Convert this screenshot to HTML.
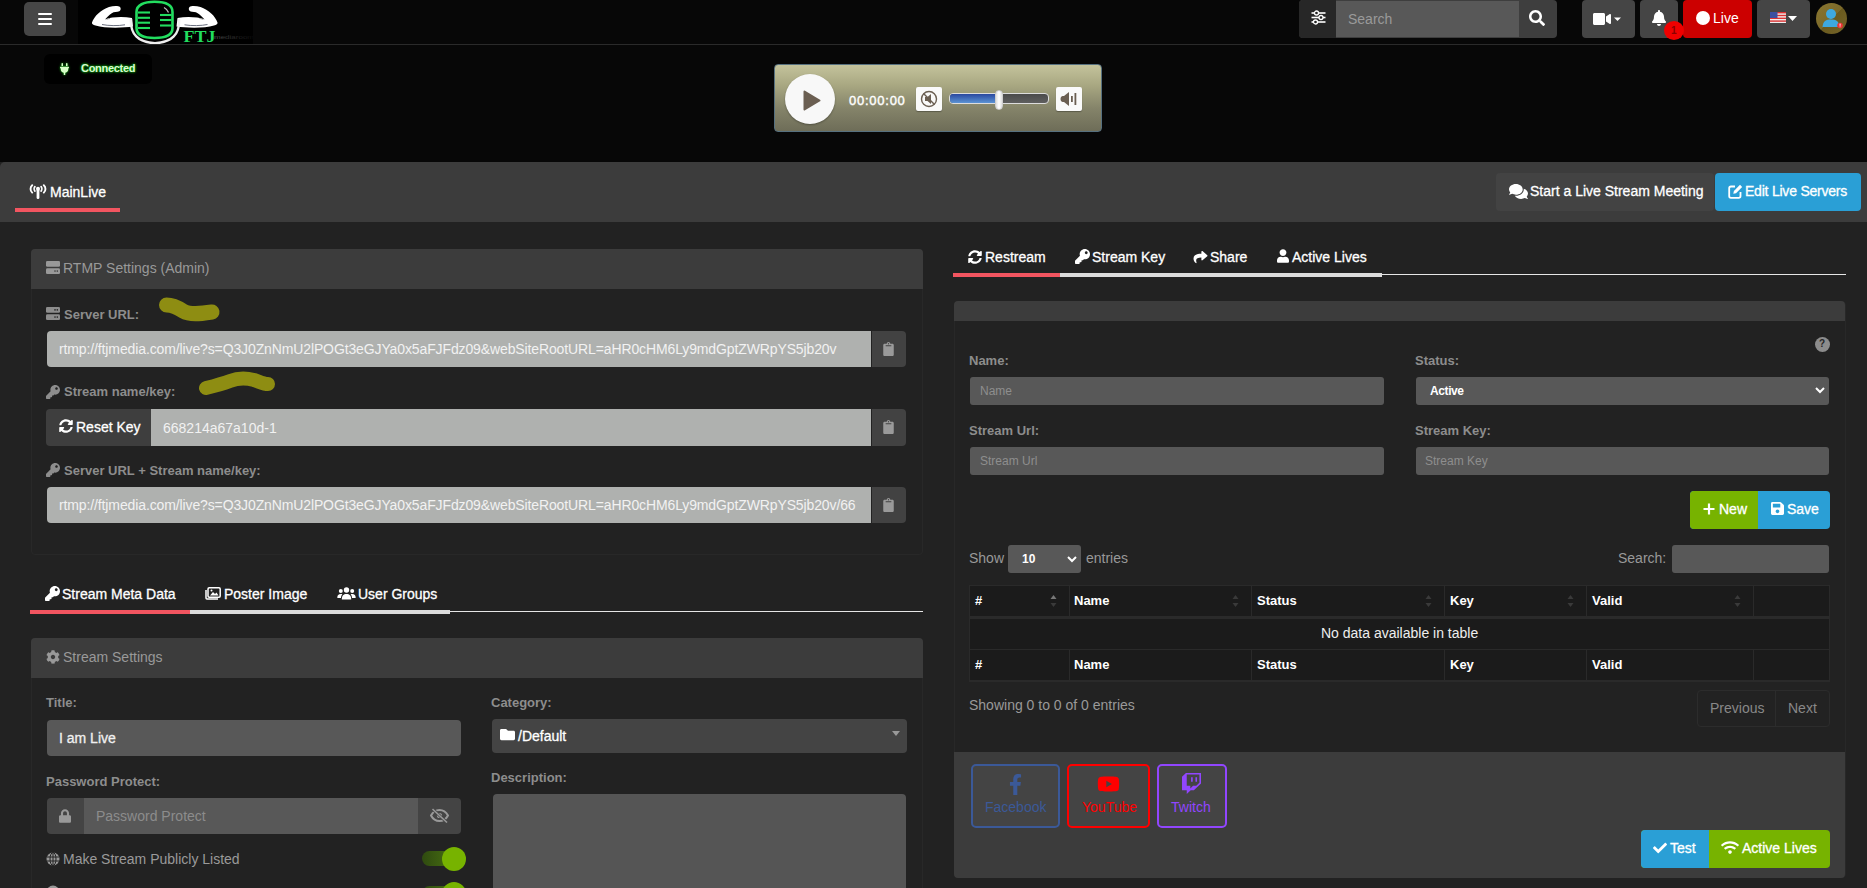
<!DOCTYPE html>
<html><head><meta charset="utf-8">
<style>
*{box-sizing:border-box;margin:0;padding:0}
html,body{width:1867px;height:888px;overflow:hidden;background:#222;font-family:"Liberation Sans",sans-serif;color:#fff}
.a{position:absolute}
.t{position:absolute;line-height:1;white-space:nowrap}
svg{position:absolute;display:block}
#top{left:0;top:0;width:1867px;height:162px;background:#070707}
.navline{left:0;top:44px;width:1867px;height:1px;background:#2a2a2a}
.btn{position:absolute;border-radius:4px}
.lbl{position:absolute;line-height:1;white-space:nowrap;font-weight:bold;font-size:13px;color:#8d8d8d}
</style></head><body>
<!-- TOP AREA -->
<div class="a" id="top"></div>
<div class="a navline"></div>
<!-- hamburger -->
<div class="btn" style="left:24px;top:2px;width:42px;height:34px;background:#464646;border-radius:5px"></div>
<div class="a" style="left:38px;top:13px;width:14px;height:2px;background:#fff;border-radius:1px"></div>
<div class="a" style="left:38px;top:18px;width:14px;height:2px;background:#fff;border-radius:1px"></div>
<div class="a" style="left:38px;top:23px;width:14px;height:2px;background:#fff;border-radius:1px"></div>
<!-- logo -->
<div class="a" style="left:78px;top:0;width:175px;height:44px;background:#000"></div>
<svg style="left:78px;top:0px" width="175" height="44" viewBox="0 0 175 44">
  <defs><linearGradient id="mg" x1="0" x2="1"><stop offset="0" stop-color="#5a5a5a"/><stop offset="0.3" stop-color="#333"/><stop offset="1" stop-color="#0a0a0a"/></linearGradient></defs>
  <g>
  <path d="M14 22.5 C16 16.5 23 9.5 31 7 C35 6 40 5.5 42 7 C43.5 9 42.5 11.5 39.5 11.8 C36.5 12 34.5 12.3 32 14.5 C30 16.3 28.5 18 27 19.5 C34 16.8 45 16.5 54 18 L55 26.5 C45 28 27 28.5 17.5 25.5 C15 24.8 13.6 23.8 14 22.5 Z" fill="#fff"/>
  <path d="M24 24.5 C30 25.8 40 26 47 24.8" fill="none" stroke="#5a6070" stroke-width="0.9"/>
  <path d="M28.5 19.3 C30 18.8 31 18.6 32 18.5" fill="none" stroke="#777" stroke-width="0.7"/>
  </g>
  <g transform="translate(153.5,0) scale(-1,1)">
  <path d="M14 22.5 C16 16.5 23 9.5 31 7 C35 6 40 5.5 42 7 C43.5 9 42.5 11.5 39.5 11.8 C36.5 12 34.5 12.3 32 14.5 C30 16.3 28.5 18 27 19.5 C34 16.8 45 16.5 54 18 L55 26.5 C45 28 27 28.5 17.5 25.5 C15 24.8 13.6 23.8 14 22.5 Z" fill="#fff"/>
  <path d="M24 24.5 C30 25.8 40 26 47 24.8" fill="none" stroke="#5a6070" stroke-width="0.9"/>
  <path d="M28.5 19.3 C30 18.8 31 18.6 32 18.5" fill="none" stroke="#777" stroke-width="0.7"/>
  </g>
  <path d="M53 19 C52 34 60 42.5 77 43.2 C94 42.5 102 34 101 19" fill="none" stroke="#eee" stroke-width="2.4"/>
  <path d="M58.5 12 C58.5 5 66 1.8 76.5 1.8 C87 1.8 94.5 5 94.5 12 V28 C94.5 35 87 38 76.5 38 C66 38 58.5 35 58.5 28 Z" fill="#000" stroke="#22dd5f" stroke-width="2.6"/>
  <g stroke="#22dd5f" stroke-width="2.1">
   <line x1="60" y1="12.5" x2="72" y2="12.5"/><line x1="60" y1="17.8" x2="72" y2="17.8"/><line x1="60" y1="22.7" x2="72" y2="22.7"/><line x1="60" y1="28" x2="72" y2="28"/>
   <line x1="82" y1="15" x2="93.5" y2="15"/><line x1="82" y1="20" x2="93.5" y2="20"/><line x1="82" y1="25.5" x2="93.5" y2="25.5"/>
  </g>
  <path d="M86 7.5 C88 8.5 89.5 10 90.5 12.5" stroke="#bbb" stroke-width="1.3" fill="none"/>
  <text x="105.5" y="41.5" font-family="Liberation Serif" font-weight="bold" font-size="16.5" fill="#22dd5f" textLength="32" lengthAdjust="spacingAndGlyphs">FTJ</text>
  <text x="136" y="38.5" font-family="Liberation Sans" font-size="6" fill="url(#mg)" textLength="40" lengthAdjust="spacingAndGlyphs">mediaroom</text>
</svg>

<!-- right nav -->
<div class="btn" style="left:1299px;top:0;width:258px;height:38px;background:#3e3e3e;border-radius:4px"></div>
<div class="a" style="left:1299px;top:0;width:37px;height:38px;background:#272727;border-radius:4px 0 0 4px"></div>
<div class="a" style="left:1336px;top:1px;width:183px;height:36px;background:#585858"></div>
<svg style="left:1311px;top:10px" width="15" height="16" viewBox="0 0 15 16">
 <g stroke="#fff" stroke-width="1.6"><line x1="0.5" y1="3" x2="14.5" y2="3"/><line x1="0.5" y1="7.5" x2="14.5" y2="7.5"/><line x1="0.5" y1="12" x2="14.5" y2="12"/></g>
 <g fill="#222" stroke="#fff" stroke-width="1.3"><circle cx="5.5" cy="3" r="2"/><circle cx="10" cy="7.5" r="2"/><circle cx="4.5" cy="12" r="2"/></g>
</svg>
<div class="t" style="left:1348px;top:12px;font-size:14px;color:#9a9a9a">Search</div>
<svg style="left:1529px;top:10px" width="16" height="16" viewBox="0 0 512 512"><path d="M505 442.700L405.300 343c-4.500-4.500-10.600-7-17-7H372c27.600-35.300 44-79.700 44-128C416 93.100 322.900 0 208 0S0 93.100 0 208s93.100 208 208 208c48.300 0 92.700-16.400 128-44v16.300c0 6.400 2.500 12.500 7 17l99.700 99.700c9.400 9.400 24.600 9.400 33.900 0l28.300-28.300c9.400-9.400 9.400-24.600.1-34zM208 336c-70.700 0-128-57.200-128-128 0-70.700 57.200-128 128-128 70.700 0 128 57.200 128 128 0 70.700-57.200 128-128 128z" fill="#fff"/></svg>
<!-- video -->
<div class="btn" style="left:1582px;top:0;width:53px;height:38px;background:#454545"></div>
<svg style="left:1593px;top:11px" width="32" height="16" viewBox="0 0 32 16"><svg x="0" y="0" width="18" height="16" viewBox="0 0 576 512"><path d="M336.200 64H47.800C21.400 64 0 85.400 0 111.800v288.400C0 426.600 21.400 448 47.800 448h288.400c26.400 0 47.800-21.400 47.800-47.800V111.800c0-26.400-21.400-47.800-47.800-47.800zm189.400 37.700L416 177.300v157.400l109.600 75.500c21.200 14.600 50.400-.300 50.400-25.800V127.500c0-25.400-29.100-40.400-50.400-25.800z" fill="#fff"/></svg><path d="M21 6.5 L28 6.5 L24.5 10 Z" fill="#fff"/></svg>
<!-- bell -->
<div class="btn" style="left:1640px;top:0;width:38px;height:38px;background:#454545"></div>
<svg style="left:1652px;top:10px" width="14" height="16" viewBox="0 0 448 512"><path d="M224 512c35.320 0 63.970-28.650 63.970-64H160.030c0 35.350 28.650 64 63.970 64zm215.390-149.710c-19.320-20.760-55.470-51.990-55.470-154.290 0-77.700-54.480-139.900-127.940-155.160V32c0-17.670-14.320-32-32-32s-32 14.330-32 32v20.840C118.560 68.100 64.080 130.300 64.080 208c0 102.300-36.150 133.530-55.470 154.290-6 6.450-8.660 14.160-8.610 21.710.110 16.400 12.980 32 32.100 32h383.800c19.120 0 32-15.600 32.100-32 .050-7.550-2.610-15.270-8.610-21.710z" fill="#fff"/></svg>
<!-- live -->
<div class="btn" style="left:1683px;top:0;width:69px;height:38px;background:#cc0000"></div>
<div class="a" style="left:1696px;top:11px;width:14px;height:14px;border-radius:50%;background:#fff"></div>
<div class="t" style="left:1713px;top:11px;font-size:14px;color:#fff">Live</div>
<!-- badge -->
<div class="a" style="left:1664px;top:21px;width:20px;height:19px;border-radius:50%;background:#f00000"></div>
<div class="t" style="left:1671px;top:26px;font-size:10px;color:#8a0000;font-weight:bold">1</div>
<!-- flag -->
<div class="btn" style="left:1757px;top:0;width:53px;height:38px;background:#454545"></div>
<svg style="left:1770px;top:12px" width="16" height="11" viewBox="0 0 16 11">
 <rect width="16" height="11" fill="#eee"/>
 <g fill="#d33"><rect y="0" width="16" height="1.4"/><rect y="2.8" width="16" height="1.4"/><rect y="5.6" width="16" height="1.4"/><rect y="8.4" width="16" height="1.4"/></g>
 <rect width="7.5" height="6" fill="#3a4fa0"/>
</svg>
<svg style="left:1788px;top:16px" width="9" height="5" viewBox="0 0 9 5"><path d="M0 0 H9 L4.5 5 Z" fill="#fff"/></svg>
<!-- avatar -->
<div class="a" style="left:1816px;top:3px;width:31px;height:31px;border-radius:50%;background:linear-gradient(135deg,#8a7630 0%,#7c6a2a 50%,#6a5a1e 51%,#75642a 100%)"></div>
<svg style="left:1816px;top:3px" width="31" height="31" viewBox="0 0 31 31">
 <circle cx="15" cy="11" r="5" fill="#3ea9e0"/><path d="M6.5 24 C7 18 10 16.5 15 16.5 C20 16.5 23 18 23.5 24 Z" fill="#3ea9e0"/>
 <circle cx="24" cy="22.5" r="2.8" fill="#e33"/><rect x="23.6" y="20.6" width="0.9" height="2.2" fill="#fff"/><rect x="23.6" y="23.4" width="0.9" height="0.8" fill="#fff"/>
</svg>
<!-- connected -->
<div class="a" style="left:44px;top:54px;width:108px;height:30px;background:#000;border-radius:6px"></div>
<svg style="left:60px;top:63px;filter:drop-shadow(0 0 1px #1c1)" width="9" height="12" viewBox="0 0 384 512"><path d="M320,32a32,32,0,0,0-64,0v96h64Zm48,128H16A16,16,0,0,0,0,176v32a16,16,0,0,0,16,16H32v32A160.070,160.070,0,0,0,160,412.800V512h64V412.800A160.070,160.070,0,0,0,352,256V224h16a16,16,0,0,0,16-16V176A16,16,0,0,0,368,160ZM128,32a32,32,0,0,0-64,0v96h64Z" fill="#d8ffc8"/></svg>
<div class="t" style="left:81px;top:63px;font-size:11px;font-weight:bold;letter-spacing:-0.3px;color:#dcf5d4;text-shadow:0 0 2px #1c1,0 0 3px #0a0">Connected</div>
<!-- player -->
<div class="a" style="left:774px;top:64px;width:328px;height:68px;border-radius:4px;border:1px solid #56707f;background:linear-gradient(#c4c39c,#a9a882 30%,#85846a 65%,#6e6d58)"></div>
<div class="a" style="left:785px;top:74px;width:50px;height:50px;border-radius:50%;background:#f8f8f8;box-shadow:0 1px 2px rgba(0,0,0,.3)"></div>
<svg style="left:803px;top:90px" width="18" height="21" viewBox="0 0 18 21"><path d="M1.5 1.5 L16.5 10.5 L1.5 19.5 Z" fill="#6b5f52" stroke="#6b5f52" stroke-width="2" stroke-linejoin="round"/></svg>
<div class="t" style="left:849px;top:94px;font-size:13px;letter-spacing:0.75px;-webkit-text-stroke:0.4px #fff;color:#fff">00:00:00</div>
<div class="a" style="left:916px;top:87px;width:26px;height:24px;border-radius:2px;background:#fafafa;box-shadow:0 1px 1px rgba(0,0,0,.3)"></div>
<svg style="left:920px;top:90px" width="18" height="18" viewBox="0 0 18 18">
 <circle cx="9" cy="9" r="7.5" fill="none" stroke="#6b5f52" stroke-width="1.4"/>
 <path d="M5 7 H7.5 L11 4 V14 L7.5 11 H5 Z" fill="#6b5f52"/><line x1="3.5" y1="3.5" x2="14.5" y2="14.5" stroke="#6b5f52" stroke-width="1.4"/>
</svg>
<div class="a" style="left:949px;top:93px;width:100px;height:11px;border-radius:4px;border:1px solid #ddd;background:linear-gradient(#4b4b4b,#5f5f5f)"></div>
<div class="a" style="left:950px;top:94px;width:50px;height:9px;border-radius:3px 0 0 3px;background:linear-gradient(#2a48a0,#5b93d3)"></div>
<div class="a" style="left:995px;top:90px;width:8px;height:20px;border-radius:4px;background:linear-gradient(90deg,#ddd,#fff,#ddd);border:1px solid #ccc"></div>
<div class="a" style="left:1056px;top:87px;width:26px;height:24px;border-radius:2px;background:#fafafa;box-shadow:0 1px 1px rgba(0,0,0,.3)"></div>
<svg style="left:1060px;top:91px" width="18" height="16" viewBox="0 0 18 16">
 <path d="M0.5 8 C0.5 5.5 2 5 4 5 L9 1 V15 L4 11 C2 11 0.5 10.5 0.5 8 Z" fill="#6b5f52"/>
 <rect x="11" y="5" width="1.8" height="6" fill="#6b5f52"/><rect x="14.5" y="2" width="1.8" height="12" fill="#6b5f52"/>
</svg>

<!-- MAIN PANEL HEADING -->
<div class="a" style="left:0;top:162px;width:1867px;height:60px;background:#3c3c3c;border-radius:5px 0 0 0"></div>
<svg style="left:29px;top:184px" width="18" height="15" viewBox="0 0 18 15">
 <g fill="none" stroke="#fff" stroke-linecap="round"><path d="M3.2 1.2 C1 3.2 1 6.6 3.2 8.6" stroke-width="1.9"/><path d="M5.9 2.6 C4.9 3.7 4.9 6 5.9 7.1" stroke-width="1.7"/><path d="M14.8 1.2 C17 3.2 17 6.6 14.8 8.6" stroke-width="1.9"/><path d="M12.1 2.6 C13.1 3.7 13.1 6 12.1 7.1" stroke-width="1.7"/></g>
 <circle cx="9" cy="4.8" r="2" fill="#fff"/><rect x="7.6" y="5" width="2.8" height="10" rx="1.3" fill="#fff"/>
</svg>
<div class="t" style="left:50px;top:185px;font-size:14px;color:#fff;-webkit-text-stroke:0.3px currentColor">MainLive</div>
<div class="a" style="left:15px;top:208px;width:105px;height:4px;background:#f25560"></div>
<div class="btn" style="left:1496px;top:173px;width:218px;height:38px;background:#434343"></div>
<svg style="left:1509px;top:183px" width="19" height="17" viewBox="0 0 576 512"><path d="M416 192c0-88.400-93.100-160-208-160S0 103.600 0 192c0 34.300 14.100 65.900 38 92-13.400 30.200-35.500 54.200-35.800 54.500-2.200 2.300-2.800 5.700-1.500 8.700S4.800 352 8 352c36.600 0 66.900-12.300 88.700-25 32.200 15.700 70.300 25 111.300 25 114.900 0 208-71.600 208-160zm122 220c23.900-26 38-57.700 38-92 0-66.900-53.500-124.200-129.300-148.100.900 6.600 1.300 13.300 1.300 20.100 0 105.900-107.700 192-240 192-10.800 0-21.300-.800-31.700-1.900C207.800 439.600 281.800 480 368 480c41 0 79.100-9.200 111.300-25 21.800 12.700 52.100 25 88.700 25 3.200 0 6.100-1.900 7.300-4.800 1.300-2.900.700-6.300-1.500-8.700-.300-.300-22.400-24.200-35.800-54.500z" fill="#fff"/></svg>
<div class="t" style="left:1530px;top:184px;font-size:14px;color:#fff;-webkit-text-stroke:0.3px currentColor">Start a Live Stream Meeting</div>
<div class="btn" style="left:1715px;top:173px;width:146px;height:38px;background:#2a9fd6"></div>
<svg style="left:1728px;top:184px" width="15" height="15" viewBox="0 0 15 15">
 <path d="M7 2.5 H3 C2 2.5 1.2 3.3 1.2 4.3 V12 C1.2 13 2 13.8 3 13.8 H10.7 C11.7 13.8 12.5 13 12.5 12 V8" fill="none" stroke="#fff" stroke-width="1.8"/>
 <path d="M12 0.8 L14.2 3 L8 9.2 L5.3 9.8 L5.9 7 Z" fill="#fff"/>
</svg>
<div class="t" style="left:1745px;top:184px;font-size:14px;letter-spacing:-0.22px;color:#fff;-webkit-text-stroke:0.3px currentColor">Edit Live Servers</div>

<!-- RTMP PANEL -->
<div class="a" style="left:31px;top:249px;width:892px;height:306px;border:1px solid #282828;border-radius:4px;background:#222"></div>
<div class="a" style="left:31px;top:249px;width:892px;height:40px;background:#3c3c3c;border-radius:4px 4px 0 0"></div>
<svg style="left:46px;top:261px" width="14" height="13" viewBox="0 0 14 13">
 <rect x="0" y="0" width="14" height="5.8" rx="1.3" fill="#999"/><rect x="0" y="7.2" width="14" height="5.8" rx="1.3" fill="#999"/>
 <g fill="#3c3c3c"><circle cx="9" cy="10.1" r="0.8"/><circle cx="11.3" cy="10.1" r="0.8"/></g>
</svg>
<div class="t" style="left:63px;top:261px;font-size:14px;color:#999">RTMP Settings (Admin)</div>

<svg style="left:46px;top:307px" width="14" height="13" viewBox="0 0 14 13">
 <rect x="0" y="0" width="14" height="5.8" rx="1.3" fill="#8d8d8d"/><rect x="0" y="7.2" width="14" height="5.8" rx="1.3" fill="#8d8d8d"/>
 <g fill="#222"><circle cx="9" cy="2.9" r="0.8"/><circle cx="11.3" cy="2.9" r="0.8"/><circle cx="9" cy="10.1" r="0.8"/><circle cx="11.3" cy="10.1" r="0.8"/></g>
</svg>
<div class="lbl" style="left:64px;top:308px">Server URL:</div>
<svg style="left:150px;top:290px" width="80" height="40" viewBox="0 0 80 40"><path d="M16.5 15 C22 15 27 17 33 21 C40 25 49 24 62 22" fill="none" stroke="#8e8d12" stroke-width="15" stroke-linecap="round"/></svg>

<div class="a" style="left:47px;top:331px;width:824px;height:36px;background:#afb1af;border-radius:4px 0 0 4px"></div>
<div class="t" style="left:59px;top:342px;font-size:14px;letter-spacing:-0.12px;color:#f2f2f2">rtmp://ftjmedia.com/live?s=Q3J0ZnNmU2lPOGt3eGJYa0x5aFJFdz09&amp;webSiteRootURL=aHR0cHM6Ly9mdGptZWRpYS5jb20v</div>
<div class="a" style="left:872px;top:331px;width:34px;height:36px;background:#424242;border-radius:0 4px 4px 0"></div>

<svg style="left:46px;top:385px" width="14" height="14" viewBox="0 0 512 512"><path d="M512 176.001C512 273.203 433.202 352 336 352c-11.220 0-22.190-1.062-32.827-3.069l-24.012 27.014A23.999 23.999 0 0 1 261.223 384H224v40c0 13.255-10.745 24-24 24h-40v40c0 13.255-10.745 24-24 24H24c-13.255 0-24-10.745-24-24v-78.059c0-6.365 2.529-12.470 7.029-16.971l161.802-161.802C163.108 213.814 160 195.271 160 176 160 78.798 238.797.001 335.999 0 433.488-.001 512 78.511 512 176.001zM336 128c0 26.510 21.490 48 48 48s48-21.490 48-48-21.490-48-48-48-48 21.490-48 48z" fill="#8d8d8d"/></svg>
<div class="lbl" style="left:64px;top:385px">Stream name/key:</div>
<svg style="left:190px;top:360px" width="100" height="45" viewBox="0 0 100 45"><path d="M16 28 C24 26 32 24 40 21 C48 18 56 18 64 20 C70 22 74 24 78 24" fill="none" stroke="#8e8d12" stroke-width="14" stroke-linecap="round"/></svg>

<div class="a" style="left:46px;top:409px;width:105px;height:37px;background:#3e3e3e;border-radius:4px 0 0 4px"></div>
<svg style="left:59px;top:419px" width="14" height="14" viewBox="0 0 512 512"><path d="M370.72 133.28C339.458 104.008 298.888 87.962 255.848 88c-77.458.068-144.328 53.178-162.791 126.85-1.344 5.363-6.122 9.15-11.651 9.15H24.103c-7.498 0-13.194-6.807-11.807-14.176C33.933 94.924 134.813 8 256 8c66.448 0 126.791 26.136 171.315 68.685L463.03 40.97C478.149 25.851 504 36.559 504 57.941V192c0 13.255-10.745 24-24 24H345.941c-21.382 0-32.090-25.851-16.971-40.971l41.750-41.749zM32 296h134.059c21.382 0 32.090 25.851 16.971 40.971l-41.750 41.750c31.262 29.273 71.835 45.319 114.876 45.280 77.418-.070 144.315-53.144 162.787-126.849 1.344-5.363 6.122-9.150 11.651-9.150h57.304c7.498 0 13.194 6.807 11.807 14.176C478.067 417.076 377.187 504 256 504c-66.448 0-126.791-26.136-171.315-68.685L48.970 471.030C33.851 486.149 8 475.441 8 454.059V320c0-13.255 10.745-24 24-24z" fill="#fff"/></svg>
<div class="t" style="left:76px;top:420px;font-size:14px;color:#fff;-webkit-text-stroke:0.3px currentColor">Reset Key</div>
<div class="a" style="left:151px;top:409px;width:720px;height:37px;background:#afb1af"></div>
<div class="t" style="left:163px;top:421px;font-size:14px;color:#f2f2f2">668214a67a10d-1</div>
<div class="a" style="left:872px;top:409px;width:34px;height:37px;background:#424242;border-radius:0 4px 4px 0"></div>

<svg style="left:46px;top:463px" width="14" height="14" viewBox="0 0 512 512"><path d="M512 176.001C512 273.203 433.202 352 336 352c-11.220 0-22.190-1.062-32.827-3.069l-24.012 27.014A23.999 23.999 0 0 1 261.223 384H224v40c0 13.255-10.745 24-24 24h-40v40c0 13.255-10.745 24-24 24H24c-13.255 0-24-10.745-24-24v-78.059c0-6.365 2.529-12.470 7.029-16.971l161.802-161.802C163.108 213.814 160 195.271 160 176 160 78.798 238.797.001 335.999 0 433.488-.001 512 78.511 512 176.001zM336 128c0 26.510 21.490 48 48 48s48-21.490 48-48-21.490-48-48-48-48 21.490-48 48z" fill="#8d8d8d"/></svg>
<div class="lbl" style="left:64px;top:464px">Server URL + Stream name/key:</div>
<div class="a" style="left:47px;top:487px;width:824px;height:36px;background:#afb1af;border-radius:4px 0 0 4px"></div>
<div class="t" style="left:59px;top:498px;font-size:14px;letter-spacing:-0.12px;color:#f2f2f2">rtmp://ftjmedia.com/live?s=Q3J0ZnNmU2lPOGt3eGJYa0x5aFJFdz09&amp;webSiteRootURL=aHR0cHM6Ly9mdGptZWRpYS5jb20v/66</div>
<div class="a" style="left:872px;top:487px;width:34px;height:36px;background:#424242;border-radius:0 4px 4px 0"></div>
<svg style="left:883px;top:342px" width="11" height="14" viewBox="0 0 384 512"><path d="M336 64h-80c0-35.300-28.700-64-64-64s-64 28.700-64 64H48C21.500 64 0 85.500 0 112v352c0 26.500 21.500 48 48 48h288c26.500 0 48-21.500 48-48V112c0-26.500-21.500-48-48-48zM192 40c13.300 0 24 10.700 24 24s-10.700 24-24 24-24-10.700-24-24 10.700-24 24-24zm96 114H96c-4.400 0-8-3.600-8-8v-16c0-4.400 3.600-8 8-8h192c4.400 0 8 3.600 8 8v16c0 4.400-3.600 8-8 8z" fill="#9a9a9a"/></svg>
<svg style="left:883px;top:420px" width="11" height="14" viewBox="0 0 384 512"><path d="M336 64h-80c0-35.300-28.700-64-64-64s-64 28.700-64 64H48C21.500 64 0 85.500 0 112v352c0 26.500 21.500 48 48 48h288c26.500 0 48-21.500 48-48V112c0-26.500-21.500-48-48-48zM192 40c13.300 0 24 10.700 24 24s-10.700 24-24 24-24-10.700-24-24 10.700-24 24-24zm96 114H96c-4.400 0-8-3.600-8-8v-16c0-4.400 3.600-8 8-8h192c4.400 0 8 3.600 8 8v16c0 4.400-3.600 8-8 8z" fill="#9a9a9a"/></svg>
<svg style="left:883px;top:498px" width="11" height="14" viewBox="0 0 384 512"><path d="M336 64h-80c0-35.300-28.700-64-64-64s-64 28.700-64 64H48C21.500 64 0 85.500 0 112v352c0 26.500 21.500 48 48 48h288c26.500 0 48-21.500 48-48V112c0-26.500-21.500-48-48-48zM192 40c13.300 0 24 10.700 24 24s-10.700 24-24 24-24-10.700-24-24 10.700-24 24-24zm96 114H96c-4.400 0-8-3.600-8-8v-16c0-4.400 3.600-8 8-8h192c4.400 0 8 3.600 8 8v16c0 4.400-3.600 8-8 8z" fill="#9a9a9a"/></svg>

<!-- LEFT TABS -->
<svg style="left:45px;top:586px" width="15" height="15" viewBox="0 0 512 512"><path d="M512 176.001C512 273.203 433.202 352 336 352c-11.220 0-22.190-1.062-32.827-3.069l-24.012 27.014A23.999 23.999 0 0 1 261.223 384H224v40c0 13.255-10.745 24-24 24h-40v40c0 13.255-10.745 24-24 24H24c-13.255 0-24-10.745-24-24v-78.059c0-6.365 2.529-12.470 7.029-16.971l161.802-161.802C163.108 213.814 160 195.271 160 176 160 78.798 238.797.001 335.999 0 433.488-.001 512 78.511 512 176.001zM336 128c0 26.510 21.490 48 48 48s48-21.490 48-48-21.490-48-48-48-48 21.490-48 48z" fill="#fff"/></svg>
<div class="t" style="left:62px;top:587px;font-size:14px;color:#fff;-webkit-text-stroke:0.3px currentColor">Stream Meta Data</div>
<svg style="left:205px;top:587px" width="16" height="13" viewBox="0 0 16 13">
 <rect x="3" y="0.8" width="12.2" height="9.4" rx="1.2" fill="none" stroke="#fff" stroke-width="1.5"/>
 <path d="M1 3 V11 C1 11.6 1.4 12 2 12 H13" fill="none" stroke="#fff" stroke-width="1.5"/>
 <path d="M5 8.5 L8 5 L10 7 L11.5 5.5 L13.5 8.5 Z" fill="#fff"/><circle cx="6.5" cy="3.6" r="1" fill="#fff"/>
</svg>
<div class="t" style="left:224px;top:587px;font-size:14px;color:#fff;-webkit-text-stroke:0.3px currentColor">Poster Image</div>
<svg style="left:337px;top:587px" width="19" height="13" viewBox="0 0 19 13">
 <circle cx="9.5" cy="3" r="2.7" fill="#fff"/><path d="M4.8 12.5 C4.8 8.5 6.5 7 9.5 7 C12.5 7 14.2 8.5 14.2 12.5 Z" fill="#fff"/>
 <circle cx="3.8" cy="4" r="2" fill="#fff"/><path d="M0.3 11 C0.3 8 1.5 7 3.8 7 C4.5 7 5 7.1 5.4 7.3 C4.5 8.3 4 9.5 4 11 Z" fill="#fff"/>
 <circle cx="15.2" cy="4" r="2" fill="#fff"/><path d="M18.7 11 C18.7 8 17.5 7 15.2 7 C14.5 7 14 7.1 13.6 7.3 C14.5 8.3 15 9.5 15 11 Z" fill="#fff"/>
</svg>
<div class="t" style="left:358px;top:587px;font-size:14px;color:#fff;-webkit-text-stroke:0.3px currentColor">User Groups</div>
<div class="a" style="left:30px;top:611px;width:893px;height:1px;background:#e6e6e6"></div>
<div class="a" style="left:30px;top:610px;width:160px;height:4px;background:#f25560"></div>
<div class="a" style="left:190px;top:610px;width:260px;height:4px;background:#dcdcdc"></div>

<!-- STREAM SETTINGS PANEL -->
<div class="a" style="left:31px;top:638px;width:892px;height:300px;border:1px solid #282828;border-radius:4px;background:#222"></div>
<div class="a" style="left:31px;top:638px;width:892px;height:40px;background:#3c3c3c;border-radius:4px 4px 0 0"></div>
<svg style="left:46px;top:650px" width="14" height="14" viewBox="0 0 512 512"><path d="M487.400 315.700l-42.600-24.600c4.300-23.200 4.300-47 0-70.200l42.600-24.600c4.900-2.800 7.100-8.600 5.500-14-11.100-35.600-30-67.800-54.700-94.600-3.800-4.100-10-5.100-14.800-2.300L380.800 110c-17.900-15.400-38.500-27.300-60.800-35.100V25.800c0-5.600-3.900-10.500-9.400-11.700-36.700-8.200-74.300-7.800-109.200 0-5.500 1.200-9.400 6.100-9.400 11.700V75c-22.200 7.900-42.800 19.800-60.800 35.100L88.700 85.500c-4.900-2.800-11-1.900-14.800 2.300-24.700 26.700-43.600 58.900-54.700 94.600-1.700 5.400.6 11.200 5.500 14L67.300 221c-4.300 23.200-4.300 47 0 70.200l-42.600 24.600c-4.900 2.800-7.100 8.600-5.500 14 11.100 35.600 30 67.800 54.700 94.600 3.800 4.100 10 5.100 14.800 2.300l42.600-24.600c17.900 15.400 38.500 27.300 60.800 35.100v49.200c0 5.600 3.900 10.500 9.400 11.700 36.700 8.200 74.300 7.800 109.200 0 5.500-1.200 9.400-6.100 9.400-11.700v-49.200c22.200-7.900 42.800-19.800 60.800-35.100l42.600 24.600c4.900 2.800 11 1.900 14.800-2.300 24.700-26.700 43.600-58.900 54.700-94.600 1.500-5.500-.7-11.300-5.600-14.100zM256 336c-44.100 0-80-35.900-80-80s35.900-80 80-80 80 35.900 80 80-35.900 80-80 80z" fill="#999"/></svg>
<div class="t" style="left:63px;top:650px;font-size:14px;color:#999">Stream Settings</div>

<div class="lbl" style="left:46px;top:696px">Title:</div>
<div class="a" style="left:47px;top:720px;width:414px;height:36px;background:#585858;border-radius:4px"></div>
<div class="t" style="left:59px;top:731px;font-size:14px;color:#f0f0f0;-webkit-text-stroke:0.3px currentColor">I am Live</div>

<div class="lbl" style="left:491px;top:696px">Category:</div>
<div class="a" style="left:492px;top:719px;width:415px;height:34px;background:#444;border-radius:4px"></div>
<svg style="left:500px;top:727px" width="15" height="15" viewBox="0 0 512 512"><path d="M464 128H272l-64-64H48C21.490 64 0 85.490 0 112v288c0 26.510 21.490 48 48 48h416c26.510 0 48-21.490 48-48V176c0-26.510-21.490-48-48-48z" fill="#fff"/></svg>
<div class="t" style="left:518px;top:729px;font-size:14px;color:#fff;-webkit-text-stroke:0.3px currentColor">/Default</div>
<svg style="left:892px;top:731px" width="8" height="5" viewBox="0 0 8 5"><path d="M0 0 H8 L4 5 Z" fill="#999"/></svg>

<div class="lbl" style="left:46px;top:775px">Password Protect:</div>
<div class="a" style="left:47px;top:798px;width:414px;height:36px;background:#444;border-radius:4px"></div>
<div class="a" style="left:84px;top:798px;width:334px;height:36px;background:#585858"></div>
<svg style="left:59px;top:809px" width="12" height="14" viewBox="0 0 448 512"><path d="M400 224h-24v-72C376 68.200 307.800 0 224 0S72 68.200 72 152v72H48c-26.500 0-48 21.500-48 48v192c0 26.500 21.500 48 48 48h352c26.500 0 48-21.500 48-48V272c0-26.500-21.500-48-48-48zm-104 0H152v-72c0-39.700 32.300-72 72-72s72 32.300 72 72v72z" fill="#999"/></svg>
<div class="t" style="left:96px;top:809px;font-size:14px;color:#8c8c8c">Password Protect</div>
<svg style="left:430px;top:808px" width="19" height="15" viewBox="0 0 19 15">
 <path d="M1 7.5 C3 3.8 6 2 9.5 2 C13 2 16 3.8 18 7.5 C16 11.2 13 13 9.5 13 C6 13 3 11.2 1 7.5 Z" fill="none" stroke="#999" stroke-width="2"/>
 <circle cx="9.5" cy="7.5" r="2.6" fill="#999"/><line x1="2.5" y1="1" x2="17" y2="14.5" stroke="#444" stroke-width="3"/><line x1="2.5" y1="1" x2="17" y2="14.5" stroke="#999" stroke-width="1.6"/>
</svg>

<div class="lbl" style="left:491px;top:771px">Description:</div>
<div class="a" style="left:493px;top:794px;width:413px;height:120px;background:#555;border-radius:4px"></div>

<svg style="left:46px;top:852px" width="14" height="14" viewBox="0 0 14 14">
 <circle cx="7" cy="7" r="6.5" fill="#999"/>
 <g fill="none" stroke="#222" stroke-width="1"><ellipse cx="7" cy="7" rx="3" ry="6.5"/><line x1="0.5" y1="5" x2="13.5" y2="5"/><line x1="0.5" y1="9" x2="13.5" y2="9"/><line x1="7" y1="0.5" x2="7" y2="13.5"/></g>
</svg>
<div class="t" style="left:63px;top:852px;font-size:14px;color:#9a9a9a">Make Stream Publicly Listed</div>
<div class="a" style="left:422px;top:851px;width:40px;height:15px;border-radius:8px;background:linear-gradient(90deg,#2f4a10,#4f7a12)"></div>
<div class="a" style="left:442px;top:847px;width:24px;height:24px;border-radius:50%;background:#77b300"></div>
<svg style="left:46px;top:885px" width="14" height="14" viewBox="0 0 14 14"><circle cx="7" cy="7" r="6.5" fill="#999"/></svg>
<div class="a" style="left:422px;top:886px;width:40px;height:15px;border-radius:8px;background:linear-gradient(90deg,#2f4a10,#4f7a12)"></div>
<div class="a" style="left:442px;top:882px;width:24px;height:24px;border-radius:50%;background:#77b300"></div>

<!-- RIGHT TABS -->
<svg style="left:968px;top:250px" width="14" height="14" viewBox="0 0 512 512"><path d="M370.72 133.28C339.458 104.008 298.888 87.962 255.848 88c-77.458.068-144.328 53.178-162.791 126.85-1.344 5.363-6.122 9.15-11.651 9.15H24.103c-7.498 0-13.194-6.807-11.807-14.176C33.933 94.924 134.813 8 256 8c66.448 0 126.791 26.136 171.315 68.685L463.03 40.97C478.149 25.851 504 36.559 504 57.941V192c0 13.255-10.745 24-24 24H345.941c-21.382 0-32.090-25.851-16.971-40.971l41.750-41.749zM32 296h134.059c21.382 0 32.090 25.851 16.971 40.971l-41.750 41.750c31.262 29.273 71.835 45.319 114.876 45.280 77.418-.070 144.315-53.144 162.787-126.849 1.344-5.363 6.122-9.150 11.651-9.150h57.304c7.498 0 13.194 6.807 11.807 14.176C478.067 417.076 377.187 504 256 504c-66.448 0-126.791-26.136-171.315-68.685L48.970 471.030C33.851 486.149 8 475.441 8 454.059V320c0-13.255 10.745-24 24-24z" fill="#fff"/></svg>
<div class="t" style="left:985px;top:250px;font-size:14px;color:#fff;-webkit-text-stroke:0.3px currentColor">Restream</div>
<svg style="left:1075px;top:249px" width="15" height="15" viewBox="0 0 512 512"><path d="M512 176.001C512 273.203 433.202 352 336 352c-11.220 0-22.190-1.062-32.827-3.069l-24.012 27.014A23.999 23.999 0 0 1 261.223 384H224v40c0 13.255-10.745 24-24 24h-40v40c0 13.255-10.745 24-24 24H24c-13.255 0-24-10.745-24-24v-78.059c0-6.365 2.529-12.470 7.029-16.971l161.802-161.802C163.108 213.814 160 195.271 160 176 160 78.798 238.797.001 335.999 0 433.488-.001 512 78.511 512 176.001zM336 128c0 26.510 21.490 48 48 48s48-21.490 48-48-21.490-48-48-48-48 21.490-48 48z" fill="#fff"/></svg>
<div class="t" style="left:1092px;top:250px;font-size:14px;color:#fff;-webkit-text-stroke:0.3px currentColor">Stream Key</div>
<svg style="left:1193px;top:250px" width="15" height="14" viewBox="0 0 512 512"><path d="M503.691 189.836L327.687 37.851C312.281 24.546 288 35.347 288 56.015v80.053C127.371 137.907 0 170.100 0 322.326c0 61.441 39.581 122.309 83.333 154.132 13.653 9.931 33.111-2.533 28.077-18.631C66.066 312.814 132.917 274.316 288 272.085V360c0 20.700 24.300 31.453 39.687 18.164l176.004-152c11.071-9.562 11.086-26.753 0-36.328z" fill="#fff"/></svg>
<div class="t" style="left:1210px;top:250px;font-size:14px;color:#fff;-webkit-text-stroke:0.3px currentColor">Share</div>
<svg style="left:1277px;top:249px" width="12" height="14" viewBox="0 0 448 512"><path d="M224 256c70.700 0 128-57.300 128-128S294.700 0 224 0 96 57.300 96 128s57.300 128 128 128zm89.600 32h-16.700c-22.200 10.200-46.900 16-72.900 16s-50.600-5.800-72.900-16h-16.700C60.200 288 0 348.200 0 422.400V464c0 26.500 21.500 48 48 48h352c26.500 0 48-21.500 48-48v-41.600c0-74.200-60.200-134.400-134.400-134.400z" fill="#fff"/></svg>
<div class="t" style="left:1292px;top:250px;font-size:14px;color:#fff;-webkit-text-stroke:0.3px currentColor">Active Lives</div>
<div class="a" style="left:953px;top:274px;width:893px;height:1px;background:#e6e6e6"></div>
<div class="a" style="left:953px;top:273px;width:107px;height:4px;background:#f25560"></div>
<div class="a" style="left:1060px;top:273px;width:322px;height:4px;background:#dcdcdc"></div>

<!-- RIGHT PANEL -->
<div class="a" style="left:954px;top:301px;width:892px;height:577px;border:1px solid #282828;border-radius:4px;background:#222"></div>
<div class="a" style="left:954px;top:301px;width:891px;height:20px;background:#3c3c3c;border-radius:4px 4px 0 0"></div>
<div class="a" style="left:1815px;top:337px;width:15px;height:15px;border-radius:50%;background:#8c8c8c"></div>
<div class="t" style="left:1819px;top:339px;font-size:10px;font-weight:bold;color:#262626">?</div>

<div class="lbl" style="left:969px;top:354px">Name:</div>
<div class="a" style="left:970px;top:377px;width:414px;height:28px;background:#585858;border-radius:3px"></div>
<div class="t" style="left:980px;top:385px;font-size:12px;color:#8e8e8e">Name</div>
<div class="lbl" style="left:1415px;top:354px">Status:</div>
<div class="a" style="left:1416px;top:377px;width:413px;height:28px;background:#585858;border-radius:3px"></div>
<div class="t" style="left:1430px;top:385px;font-size:12px;font-weight:bold;letter-spacing:-0.4px;color:#fff">Active</div>
<svg style="left:1815px;top:387px" width="10" height="7" viewBox="0 0 10 7"><path d="M1 1 L5 5 L9 1" fill="none" stroke="#fff" stroke-width="2"/></svg>

<div class="lbl" style="left:969px;top:424px">Stream Url:</div>
<div class="a" style="left:970px;top:447px;width:414px;height:28px;background:#585858;border-radius:3px"></div>
<div class="t" style="left:980px;top:455px;font-size:12px;color:#8e8e8e">Stream Url</div>
<div class="lbl" style="left:1415px;top:424px">Stream Key:</div>
<div class="a" style="left:1416px;top:447px;width:413px;height:28px;background:#585858;border-radius:3px"></div>
<div class="t" style="left:1425px;top:455px;font-size:12px;color:#8e8e8e">Stream Key</div>

<div class="btn" style="left:1690px;top:491px;width:140px;height:38px;background:#2a9fd6"></div>
<div class="a" style="left:1690px;top:491px;width:68px;height:38px;background:#77b300;border-radius:4px 0 0 4px"></div>
<svg style="left:1703px;top:503px" width="12" height="12" viewBox="0 0 12 12"><path d="M6 0.5 V11.5 M0.5 6 H11.5" stroke="#fff" stroke-width="2.2"/></svg>
<div class="t" style="left:1719px;top:502px;font-size:14px;color:#fff;-webkit-text-stroke:0.3px currentColor">New</div>
<svg style="left:1771px;top:501px" width="13" height="15" viewBox="0 0 448 512"><path d="M433.941 129.941l-83.882-83.882A48 48 0 0 0 316.118 32H48C21.490 32 0 53.490 0 80v352c0 26.510 21.490 48 48 48h352c26.510 0 48-21.490 48-48V163.882a48 48 0 0 0-14.059-33.941zM224 416c-35.346 0-64-28.654-64-64 0-35.346 28.654-64 64-64s64 28.654 64 64c0 35.346-28.654 64-64 64zm96-304.520V212c0 6.627-5.373 12-12 12H76c-6.627 0-12-5.373-12-12V108c0-6.627 5.373-12 12-12h228.520c3.183 0 6.235 1.264 8.485 3.515l3.480 3.480A11.996 11.996 0 0 1 320 111.480z" fill="#fff"/></svg>
<div class="t" style="left:1787px;top:502px;font-size:14px;color:#fff;-webkit-text-stroke:0.3px currentColor">Save</div>

<div class="t" style="left:969px;top:551px;font-size:14px;color:#999">Show</div>
<div class="a" style="left:1008px;top:545px;width:73px;height:28px;background:#585858;border-radius:3px"></div>
<div class="t" style="left:1022px;top:553px;font-size:12px;font-weight:bold;color:#fff">10</div>
<svg style="left:1067px;top:556px" width="10" height="7" viewBox="0 0 10 7"><path d="M1 1 L5 5 L9 1" fill="none" stroke="#fff" stroke-width="2"/></svg>
<div class="t" style="left:1086px;top:551px;font-size:14px;color:#999">entries</div>
<div class="t" style="left:1618px;top:551px;font-size:14px;color:#999">Search:</div>
<div class="a" style="left:1672px;top:545px;width:157px;height:28px;background:#585858;border-radius:3px"></div>

<!-- TABLE -->
<div class="a" style="left:969px;top:585px;width:861px;height:97px;background:#2a2a2a"></div>
<div class="a" style="left:970px;top:586px;width:859px;height:30px;background:#1b1b1b"></div>
<div class="a" style="left:970px;top:619px;width:859px;height:30px;background:#1b1b1b"></div>
<div class="a" style="left:970px;top:650px;width:859px;height:30px;background:#1b1b1b"></div>
<div class="a" style="left:1069px;top:586px;width:1px;height:30px;background:#2a2a2a"></div>
<div class="a" style="left:1069px;top:650px;width:1px;height:30px;background:#2a2a2a"></div>
<div class="a" style="left:1251px;top:586px;width:1px;height:30px;background:#2a2a2a"></div>
<div class="a" style="left:1251px;top:650px;width:1px;height:30px;background:#2a2a2a"></div>
<div class="a" style="left:1444px;top:586px;width:1px;height:30px;background:#2a2a2a"></div>
<div class="a" style="left:1444px;top:650px;width:1px;height:30px;background:#2a2a2a"></div>
<div class="a" style="left:1586px;top:586px;width:1px;height:30px;background:#2a2a2a"></div>
<div class="a" style="left:1586px;top:650px;width:1px;height:30px;background:#2a2a2a"></div>
<div class="a" style="left:1753px;top:586px;width:1px;height:30px;background:#2a2a2a"></div>
<div class="a" style="left:1753px;top:650px;width:1px;height:30px;background:#2a2a2a"></div>
<div class="t" style="left:975px;top:594px;font-size:13px;font-weight:bold;color:#fff">#</div>
<div class="t" style="left:975px;top:658px;font-size:13px;font-weight:bold;color:#fff">#</div>
<div class="t" style="left:1074px;top:594px;font-size:13px;font-weight:bold;color:#fff">Name</div>
<div class="t" style="left:1074px;top:658px;font-size:13px;font-weight:bold;color:#fff">Name</div>
<div class="t" style="left:1257px;top:594px;font-size:13px;font-weight:bold;color:#fff">Status</div>
<div class="t" style="left:1257px;top:658px;font-size:13px;font-weight:bold;color:#fff">Status</div>
<div class="t" style="left:1450px;top:594px;font-size:13px;font-weight:bold;color:#fff">Key</div>
<div class="t" style="left:1450px;top:658px;font-size:13px;font-weight:bold;color:#fff">Key</div>
<div class="t" style="left:1592px;top:594px;font-size:13px;font-weight:bold;color:#fff">Valid</div>
<div class="t" style="left:1592px;top:658px;font-size:13px;font-weight:bold;color:#fff">Valid</div>
<svg style="left:1050px;top:594px" width="7" height="14" viewBox="0 0 7 14"><path d="M0.5 5 L3.5 1 L6.5 5 Z" fill="#777"/><path d="M0.5 9 L3.5 13 L6.5 9 Z" fill="#3a3a3a"/></svg>
<svg style="left:1232px;top:594px" width="7" height="14" viewBox="0 0 7 14"><path d="M0.5 5 L3.5 1 L6.5 5 Z" fill="#3a3a3a"/><path d="M0.5 9 L3.5 13 L6.5 9 Z" fill="#3a3a3a"/></svg>
<svg style="left:1425px;top:594px" width="7" height="14" viewBox="0 0 7 14"><path d="M0.5 5 L3.5 1 L6.5 5 Z" fill="#3a3a3a"/><path d="M0.5 9 L3.5 13 L6.5 9 Z" fill="#3a3a3a"/></svg>
<svg style="left:1567px;top:594px" width="7" height="14" viewBox="0 0 7 14"><path d="M0.5 5 L3.5 1 L6.5 5 Z" fill="#3a3a3a"/><path d="M0.5 9 L3.5 13 L6.5 9 Z" fill="#3a3a3a"/></svg>
<svg style="left:1734px;top:594px" width="7" height="14" viewBox="0 0 7 14"><path d="M0.5 5 L3.5 1 L6.5 5 Z" fill="#3a3a3a"/><path d="M0.5 9 L3.5 13 L6.5 9 Z" fill="#3a3a3a"/></svg>

<div class="t" style="left:1321px;top:626px;font-size:14px;color:#eee">No data available in table</div>
<div class="t" style="left:969px;top:698px;font-size:14px;color:#999">Showing 0 to 0 of 0 entries</div>
<div class="a" style="left:1697px;top:690px;width:133px;height:37px;border:1px solid #2c2c2c;border-radius:4px"></div>
<div class="a" style="left:1775px;top:690px;width:1px;height:37px;background:#2c2c2c"></div>
<div class="t" style="left:1710px;top:701px;font-size:14px;color:#888">Previous</div>
<div class="t" style="left:1788px;top:701px;font-size:14px;color:#888">Next</div>

<!-- FOOTER PANEL -->
<div class="a" style="left:954px;top:752px;width:891px;height:126px;background:#3c3c3c;border-radius:0 0 4px 4px"></div>
<div class="a" style="left:971px;top:764px;width:89px;height:64px;border:2px solid #3b5998;border-radius:5px;background:#444"></div>
<svg style="left:1009px;top:774px" width="13" height="21" viewBox="0 0 320 512"><path d="M279.140 288l14.220-92.660h-88.910v-60.130c0-25.350 12.420-50.060 52.240-50.060h40.420V6.260S260.430 0 225.360 0c-73.220 0-121.080 44.380-121.080 124.720v70.620H22.890V288h81.390v224h100.170V288z" fill="#3b5998"/></svg>
<div class="t" style="left:985px;top:800px;font-size:14px;color:#3b5998">Facebook</div>
<div class="a" style="left:1067px;top:764px;width:83px;height:64px;border:2px solid #ff0000;border-radius:5px;background:#444"></div>
<svg style="left:1097px;top:774px" width="23" height="20" viewBox="0 0 576 512"><path d="M549.655 124.083c-6.281-23.650-24.787-42.276-48.284-48.597C458.781 64 288 64 288 64S117.220 64 74.629 75.486c-23.497 6.322-42.003 24.947-48.284 48.597-11.412 42.867-11.412 132.305-11.412 132.305s0 89.438 11.412 132.305c6.281 23.650 24.787 41.500 48.284 47.821C117.220 448 288 448 288 448s170.780 0 213.371-11.486c23.497-6.321 42.003-24.171 48.284-47.821 11.412-42.867 11.412-132.305 11.412-132.305s0-89.438-11.412-132.305zm-317.510 213.508V175.185l142.739 81.205-142.739 81.201z" fill="#f00"/></svg>
<div class="t" style="left:1082px;top:800px;font-size:14px;color:#f00">YouTube</div>
<div class="a" style="left:1157px;top:764px;width:70px;height:64px;border:2px solid #9146ff;border-radius:5px;background:#444"></div>
<svg style="left:1181px;top:773px" width="21" height="21" viewBox="0 0 512 512"><path d="M391.170,103.470H352.540v109.700h38.630ZM285,103H246.370V212.750H285ZM120.830,0,24.310,91.420V420.580H140.140V512l96.530-91.420h77.250L487.690,256V0ZM449.070,237.750l-77.220,73.120H294.610l-67.600,64v-64H140.140V36.580H449.070Z" fill="#9146ff"/></svg>
<div class="t" style="left:1171px;top:800px;font-size:14px;color:#9146ff">Twitch</div>

<div class="btn" style="left:1641px;top:830px;width:189px;height:38px;background:#77b300"></div>
<div class="a" style="left:1641px;top:830px;width:68px;height:38px;background:#2a9fd6;border-radius:4px 0 0 4px"></div>
<svg style="left:1653px;top:841px" width="14" height="14" viewBox="0 0 512 512"><path d="M173.898 439.404l-166.400-166.400c-9.997-9.997-9.997-26.206 0-36.204l36.203-36.204c9.997-9.998 26.207-9.998 36.204 0L192 312.690 432.095 72.596c9.997-9.997 26.207-9.997 36.204 0l36.203 36.204c9.997 9.997 9.997 26.206 0 36.204l-294.400 294.401c-9.998 9.997-26.207 9.997-36.204-.001z" fill="#fff"/></svg>
<div class="t" style="left:1670px;top:841px;font-size:14px;color:#fff;-webkit-text-stroke:0.3px currentColor">Test</div>
<svg style="left:1721px;top:840px" width="18" height="15" viewBox="0 0 640 512"><path d="M634.910 154.880C457.740-8.990 182.190-8.930 5.090 154.880c-6.660 6.160-6.790 16.590-.350 22.980l34.240 33.970c6.140 6.100 16.020 6.230 22.400.380 145.920-133.680 371.300-133.710 517.250 0 6.380 5.850 16.260 5.710 22.400-.380l34.240-33.970c6.430-6.390 6.300-16.820-.360-22.980zM320 352c-35.350 0-64 28.650-64 64s28.650 64 64 64 64-28.650 64-64-28.650-64-64-64zm202.670-83.590c-115.260-101.930-290.210-101.820-405.340 0-6.900 6.100-7.120 16.690-.570 23.150l34.440 33.990c6 5.920 15.660 6.320 22.050.800 83.950-72.570 209.740-72.410 293.490 0 6.390 5.520 16.050 5.130 22.050-.800l34.440-33.990c6.560-6.460 6.330-17.060-.560-23.150z" fill="#fff"/></svg>
<div class="t" style="left:1742px;top:841px;font-size:14px;color:#fff;-webkit-text-stroke:0.3px currentColor">Active Lives</div>
</body></html>
